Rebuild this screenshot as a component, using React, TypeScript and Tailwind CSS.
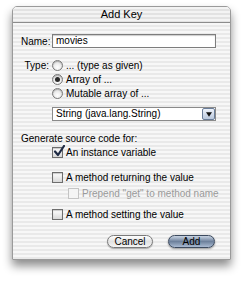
const stripes =
  "bg-[repeating-linear-gradient(to_bottom,#f7f7f7_0px,#f7f7f7_2px,#e9e9e9_2px,#e9e9e9_4px)]";

const Radio = ({ checked }: { checked?: boolean }) => (
  <span className="relative w-[11px] h-[11px] rounded-full border border-[#7a7a7a] bg-[radial-gradient(circle_at_50%_70%,#ffffff,#d8d8d8)] shadow-[inset_0_1px_1px_rgba(0,0,0,0.25)] flex items-center justify-center shrink-0">
    {checked && <span className="w-[5px] h-[5px] rounded-full bg-[#2a2a2a]" />}
  </span>
);

const Check = ({ checked, disabled }: { checked?: boolean; disabled?: boolean }) => (
  <span
    className={
      "relative w-[11px] h-[11px] border shrink-0 " +
      (disabled
        ? "border-[#c4c4c4] bg-[#f4f4f4]"
        : "border-[#6e6e6e] bg-[linear-gradient(to_bottom,#ffffff,#d9d9d9)] shadow-[inset_0_1px_1px_rgba(0,0,0,0.2)]")
    }
  >
    {checked && (
      <svg viewBox="0 0 12 12" className="absolute left-[0px] top-[-3px] w-[12px] h-[12px]">
        <path d="M2 6.5 L5 10 L11 1" fill="none" stroke="#1e2a44" strokeWidth="2.2" strokeLinecap="round" strokeLinejoin="round" />
      </svg>
    )}
  </span>
);

export default function App() {
  return (
    <div className="w-[249px] h-[282px] bg-white pt-[6px] pl-[12px] font-['Liberation_Sans',sans-serif] text-[10px] text-black">
      <div className="w-[219px] h-[254px] rounded-t-[5px] border border-[#9a9a9a] shadow-[0_6px_10px_rgba(0,0,0,0.45)] flex flex-col overflow-hidden">
        {/* title bar */}
        <div className="h-[16px] flex items-center justify-center border-b border-[#8c8c8c] text-[11px] bg-[repeating-linear-gradient(to_bottom,#f3f3f3_0px,#f3f3f3_2px,#e2e2e2_2px,#e2e2e2_4px)]">
          Add Key
        </div>

        <div className={"flex-1 flex flex-col px-[8px] " + stripes}>
          {/* name */}
          <div className="flex items-center mt-[11px] h-[14px]">
            <span className="w-[31px] whitespace-nowrap">Name:</span>
            <div className="w-[164px] h-[14px] border border-[#7d7d7d] bg-white shadow-[inset_0_1px_1px_rgba(0,0,0,0.2)] flex items-center pl-[3px] leading-none">
              movies
            </div>
          </div>

          {/* type */}
          <div className="flex mt-[11px]">
            <span className="w-[31px] text-right pr-[3px] h-[13px] leading-[13px]">Type:</span>
            <div className="flex flex-col gap-[1px]">
              <label className="flex items-center gap-[3px] h-[13px]">
                <Radio /> ... (type as given)
              </label>
              <label className="flex items-center gap-[3px] h-[13px]">
                <Radio checked /> Array of ...
              </label>
              <label className="flex items-center gap-[3px] h-[13px]">
                <Radio /> Mutable array of ...
              </label>
            </div>
          </div>

          {/* popup */}
          <div className="ml-[31px] mt-[7px] w-[164px] h-[14px] border border-[#8a8a8a] bg-white flex items-center">
            <span className="flex-1 pl-[3px] leading-none">String (java.lang.String)</span>
            <span className="w-[13px] h-[12px] rounded-[2px] border border-[#6a7d99] bg-[linear-gradient(to_bottom,#eef3fb,#b9c7dc)] flex items-center justify-center">
              <svg viewBox="0 0 8 6" className="w-[6px] h-[5px]">
                <path d="M0 0 H8 L4 6 Z" fill="#111" />
              </svg>
            </span>
          </div>

          {/* generate */}
          <div className="mt-[11px] h-[13px] leading-[13px]">Generate source code for:</div>

          <div className="ml-[31px] flex flex-col whitespace-nowrap">
            <label className="flex items-center gap-[3px] h-[13px] mt-[1px]">
              <Check checked /> An instance variable
            </label>
            <label className="flex items-center gap-[3px] h-[13px] mt-[12px]">
              <Check /> A method returning the value
            </label>
            <label className="flex items-center gap-[3px] h-[13px] mt-[3px] ml-[16px] text-[#9a9a9a]">
              <Check disabled /> Prepend "get" to method name
            </label>
            <label className="flex items-center gap-[3px] h-[13px] mt-[8px]">
              <Check /> A method setting the value
            </label>
          </div>

          {/* buttons */}
          <div className="flex justify-end gap-[15px] mt-[14px] pr-[7px]">
            <button className="w-[46px] h-[13px] rounded-full border border-[#7a7a7a] bg-[linear-gradient(to_bottom,#ffffff,#e2e2e2_50%,#f4f4f4)] shadow-[0_1px_1px_rgba(0,0,0,0.3)] text-[10px] leading-none">
              Cancel
            </button>
            <button className="w-[47px] h-[13px] rounded-full border border-[#3c4a5e] bg-[linear-gradient(to_bottom,#c9d4e3,#6e819c_50%,#a9bad1)] shadow-[0_1px_2px_rgba(0,0,0,0.4)] text-[10px] leading-none">
              Add
            </button>
          </div>
        </div>
      </div>
    </div>
  );
}
